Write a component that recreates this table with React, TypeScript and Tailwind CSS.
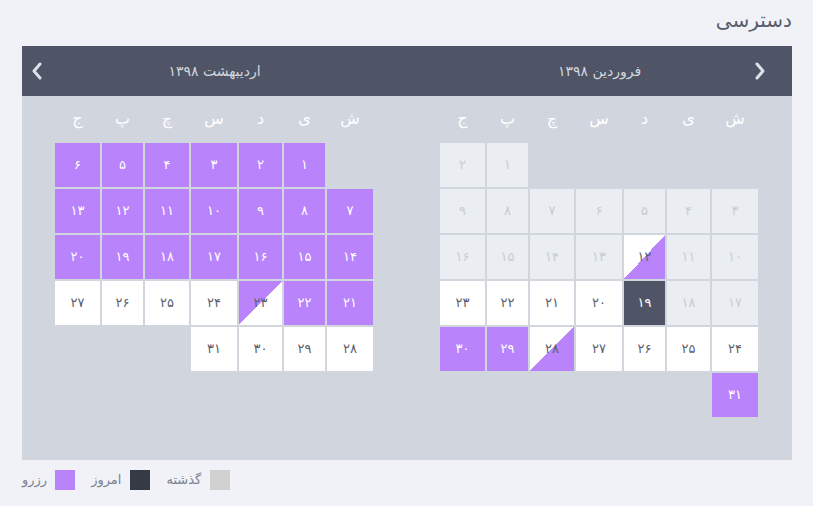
import React from "react";

type Kind = "past" | "free" | "res" | "today" | "in" | "out" | "empty";
type Cell = { n?: number; k: Kind };

const fa = (n: number) =>
  String(n).replace(/[0-9]/g, (d) => "۰۱۲۳۴۵۶۷۸۹"[Number(d)]);

const weekdays = ["ش", "ی", "د", "س", "چ", "پ", "ج"];

function buildFarvardin(): Cell[] {
  const cells: Cell[] = [];
  for (let i = 0; i < 5; i++) cells.push({ k: "empty" });
  for (let d = 1; d <= 31; d++) {
    let k: Kind = "free";
    if (d < 19) k = "past";
    if (d === 12) k = "in";
    if (d === 19) k = "today";
    if (d === 28) k = "in";
    if (d >= 29) k = "res";
    cells.push({ n: d, k });
  }
  return cells;
}

function buildOrdibehesht(): Cell[] {
  const cells: Cell[] = [{ k: "empty" }];
  for (let d = 1; d <= 31; d++) {
    let k: Kind = "free";
    if (d <= 22) k = "res";
    if (d === 23) k = "out";
    cells.push({ n: d, k });
  }
  return cells;
}

function DayCell({ c }: { c: Cell }) {
  if (c.k === "empty") return <div className="h-[44px]" />;
  const base =
    "h-[44px] flex items-center justify-center text-[13px] relative overflow-hidden";
  if (c.k === "past")
    return <div className={`${base} bg-[#eaedf2] text-[#c8ccd4]`}>{fa(c.n!)}</div>;
  if (c.k === "free")
    return <div className={`${base} bg-white text-[#5a6070]`}>{fa(c.n!)}</div>;
  if (c.k === "res")
    return <div className={`${base} bg-[#b983fb] text-white`}>{fa(c.n!)}</div>;
  if (c.k === "today")
    return <div className={`${base} bg-[#4f5566] text-white`}>{fa(c.n!)}</div>;
  if (c.k === "in")
    return (
      <div
        className={`${base} text-[#5a6070] bg-[linear-gradient(to_bottom_right,#ffffff_50%,#b983fb_50%)]`}
      >
        <span className="relative">{fa(c.n!)}</span>
      </div>
    );
  return (
    <div
      className={`${base} text-[#5a6070] bg-[linear-gradient(to_bottom_right,#b983fb_50%,#ffffff_50%)]`}
    >
      <span className="relative">{fa(c.n!)}</span>
    </div>
  );
}

function Month({ cols, cells }: { cols: string; cells: Cell[] }) {
  return (
    <div className="flex-1 flex justify-center pr-[1px]">
      <div>
        <div className={`grid ${cols} gap-x-[2px] h-[45px] items-center`}>
          {weekdays.map((w) => (
            <div key={w} className="text-center text-white text-[16px]">
              {w}
            </div>
          ))}
        </div>
        <div className={`grid ${cols} gap-[2px] mt-[2px]`}>
          {cells.map((c, i) => (
            <DayCell key={i} c={c} />
          ))}
        </div>
      </div>
    </div>
  );
}

function Chevron({ dir }: { dir: "left" | "right" }) {
  return (
    <svg width="12" height="18" viewBox="0 0 12 18" fill="none">
      <path
        d={dir === "left" ? "M9 2 L3 9 L9 16" : "M3 2 L9 9 L3 16"}
        stroke="#dde1e8"
        strokeWidth="3"
        strokeLinecap="round"
        strokeLinejoin="round"
      />
    </svg>
  );
}

export default function App() {
  return (
    <div
      dir="rtl"
      className="w-[813px] h-[506px] bg-[#f1f2f7] pl-[22px] pr-[21px] overflow-hidden"
      style={{ fontFamily: '"DejaVu Sans", "Noto Sans", sans-serif' }}
    >
      <div className="h-[40px] flex items-center text-[20px] text-[#585e6d] mb-[6px]">
        دسترسی
      </div>
      <div className="bg-[#d1d5dd] h-[414px]">
        <div className="h-[50px] bg-[#4f5566] flex">
          <div className="flex-1 flex items-center relative justify-center text-[14px] text-[#d3d7de]">
            <span className="absolute right-[26px] top-[16px]">
              <Chevron dir="right" />
            </span>
            فروردین ۱۳۹۸
          </div>
          <div className="flex-1 flex items-center relative justify-center text-[14px] text-[#d3d7de]">
            اردیبهشت ۱۳۹۸
            <span className="absolute left-[9px] top-[16px]">
              <Chevron dir="left" />
            </span>
          </div>
        </div>
        <div className="flex">
          <Month
            cols="grid-cols-[46px_43px_41px_46px_44px_41px_45px]"
            cells={buildFarvardin()}
          />
          <Month
            cols="grid-cols-[46px_41px_43px_46px_44px_41px_45px]"
            cells={buildOrdibehesht()}
          />
        </div>
      </div>
      <div className="flex justify-end mt-[10px] gap-[16px] text-[13px] text-[#7b8190]">
        <div className="flex items-center gap-[9px]">
          <span className="w-[20px] h-[20px] bg-[#d1d1d1]" />
          <span>گذشته</span>
        </div>
        <div className="flex items-center gap-[9px]">
          <span className="w-[20px] h-[20px] bg-[#343a46]" />
          <span>امروز</span>
        </div>
        <div className="flex items-center gap-[8px]">
          <span className="w-[20px] h-[20px] bg-[#b983fb]" />
          <span>رزرو</span>
        </div>
      </div>
    </div>
  );
}
